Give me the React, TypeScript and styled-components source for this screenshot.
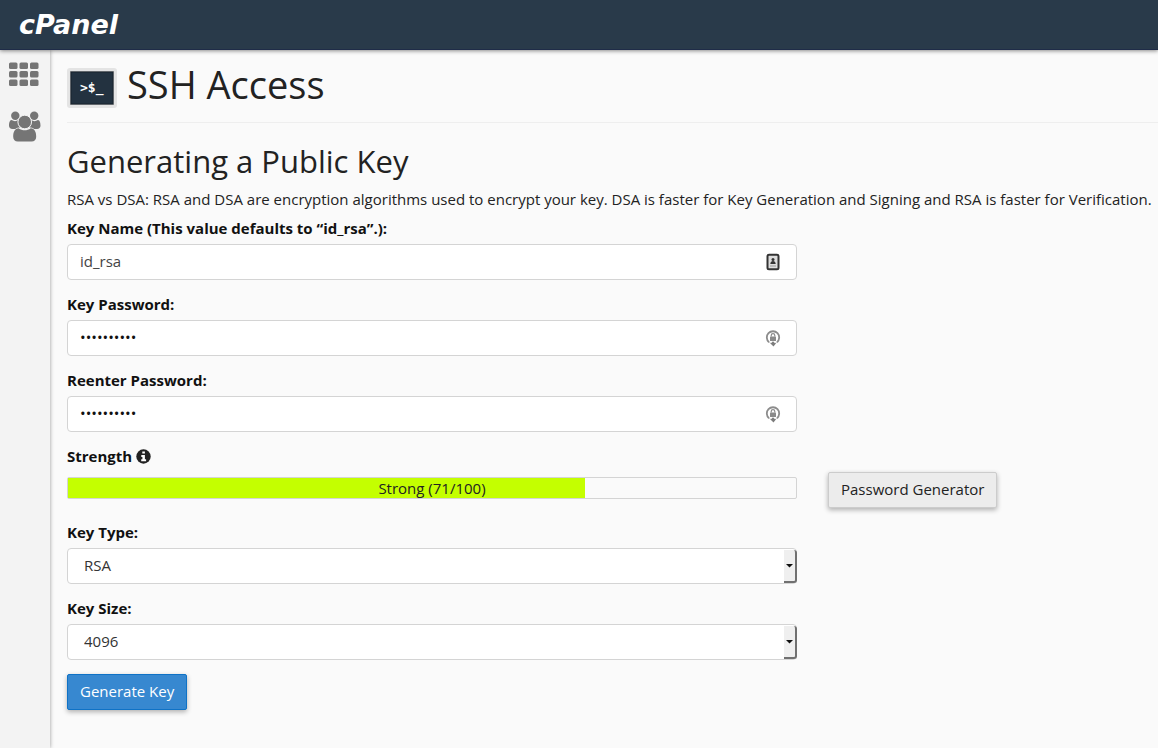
import React, { useState } from 'react';
import styled, { createGlobalStyle } from 'styled-components';

const GlobalStyle = createGlobalStyle`
  *, *::before, *::after { box-sizing: border-box; }
  body {
    margin: 0;
    background: #fafafa;
    color: #222;
    font: 15px/20px "Open Sans", sans-serif;
  }
  button, input, select { font: inherit; color: inherit; }
`;

const Page = styled.div`
  display: flex;
  flex-direction: column;
  min-height: 100vh;
`;

const TopBar = styled.header`
  position: relative;
  z-index: 1;
  display: flex;
  align-items: center;
  height: 50px;
  padding: 0 19px;
  background: #293a4a;
  border-bottom: 1px solid #1f2c48;
  box-shadow: 0 1px 4px rgba(0, 0, 0, 0.45);
`;

const Logo = styled.a`
  color: #fff;
  font: italic bold 27px/46px "DejaVu Sans", sans-serif;
  text-decoration: none;
`;

const Body = styled.div`
  display: flex;
  flex: 1;
`;

const SideBar = styled.nav`
  display: flex;
  flex-direction: column;
  align-items: flex-start;
  gap: 23px;
  flex: none;
  width: 50px;
  padding: 12px 0 0 9px;
  background: #f3f3f3;
  box-shadow: 0 0 4px rgba(0, 0, 0, 0.4);
`;

const SideLink = styled.a`
  display: block;
  color: #757575;
  svg { display: block; }
`;

const Main = styled.main`
  flex: 1;
  min-width: 0;
  padding: 10px 0 36px 17px;
`;

const TitleBar = styled.div`
  display: flex;
  gap: 10px;
  padding-bottom: 14px;
  border-bottom: 1px solid #eee;
`;

const TitleIcon = styled.svg`
  display: block;
  flex: none;
  margin-top: 8px;
`;

const Title = styled.h1`
  margin: 0;
  font-size: 38px;
  line-height: 48px;
  font-weight: 400;
`;

const SubTitle = styled.h2`
  margin: 19px 0 9px;
  font-size: 31px;
  line-height: 38px;
  font-weight: 400;
`;

const Intro = styled.p`
  margin: 0 0 9px;
`;

const Form = styled.form`
  display: grid;
  grid-template-columns: minmax(0, 730px) auto;
  justify-content: start;
  column-gap: 31px;
`;

const Field = styled.div`
  grid-column: 1;
  margin-bottom: 14px;
`;

const Label = styled.label`
  display: flex;
  align-items: center;
  gap: 4px;
  margin-bottom: 6px;
  color: #111;
  font-weight: 700;
`;

const StrengthLabel = styled(Label)`
  grid-column: 1;
`;

const Control = styled.div`
  position: relative;
`;

const TextInput = styled.input`
  display: block;
  width: 100%;
  height: 36px;
  padding: 0 40px 2px 12px;
  color: #444;
  background: #fff;
  border: 1px solid #d4d4d4;
  border-radius: 4px;

  &[type='password'] { color: #111; }
`;

const InputIcon = styled.svg`
  position: absolute;
  top: 9px;
  right: 15px;
`;

const SelectBox = styled.select`
  display: block;
  width: 100%;
  height: 36px;
  padding: 0 16px 2px;
  color: #333;
  background: #fff;
  border: 1px solid #d4d4d4;
  border-radius: 4px;
  appearance: none;
`;

const Arrow = styled.span`
  position: absolute;
  top: 2px;
  right: 0;
  bottom: 1px;
  display: flex;
  align-items: center;
  justify-content: center;
  width: 13px;
  background: #efefef;
  border: solid #707070;
  border-width: 0 2px 2px 0;
  border-radius: 0 3px 3px 0;
  pointer-events: none;
`;

const Meter = styled.div`
  position: relative;
  grid-column: 1;
  height: 22px;
  margin: 5px 0 23px;
  background: #fafafa;
  border: 1px solid #d4d4d4;
  border-radius: 2px;
`;

const MeterFill = styled.div`
  height: 100%;
  background: #c4ff00;
`;

const MeterText = styled.span`
  position: absolute;
  inset: 0;
  color: #222;
  text-align: center;
`;

const Button = styled.button<{ $primary?: boolean }>`
  grid-column: ${(p) => (p.$primary ? 1 : 2)};
  justify-self: start;
  height: 36px;
  padding: 0 12px 2px;
  color: ${(p) => (p.$primary ? '#fff' : '#222')};
  background: ${(p) => (p.$primary ? '#3788d0' : '#ececec')};
  border: 1px solid ${(p) => (p.$primary ? '#0f72c6' : '#ccc')};
  border-radius: 2px;
  box-shadow: 0 2px 5px rgba(0, 0, 0, 0.3);
  white-space: nowrap;
`;

const AppsIcon = () => (
  <svg width="30" height="26" viewBox="0 0 30 26" fill="currentColor" aria-hidden="true">
    {[0.5, 9, 17.5].map((y) =>
      [0, 10.5, 21].map((x) => <rect key={`${x}-${y}`} x={x} y={y} width="8.5" height="6.5" rx="1.5" />),
    )}
  </svg>
);

const UsersIcon = () => (
  <svg width="32" height="31" viewBox="0 0 32 31" fill="currentColor" aria-hidden="true">
    <circle cx="6.3" cy="4.7" r="4.2" />
    <circle cx="25.2" cy="4.7" r="4.2" />
    <path d="M2.6 9c2.2 1.5 4.7 1.5 6.7 0-.7 3 .1 5.5 1.7 7.6-1.8 0-3.4.5-4.7 1.4H3.5C1.3 18 0 16.8 0 14.8 0 12.3.5 9 2.6 9Z" />
    <path d="M28.9 9c-2.2 1.5-4.7 1.5-6.7 0 .7 3-.1 5.5-1.7 7.6 1.8 0 3.4.5 4.7 1.4H28c2.2 0 3.5-1.2 3.5-3.2 0-2.5-.5-5.8-2.6-5.8Z" />
    <circle cx="15.7" cy="11" r="6.8" stroke="#f3f3f3" strokeWidth="1" />
    <path d="M9.6 17.2c3.8 2.8 8.4 2.8 12.2 0 3.7 0 5.4 3.5 5.4 8.6 0 3-1.8 4.7-4.6 4.7H8.8c-2.8 0-4.6-1.7-4.6-4.7 0-5.1 1.7-8.6 5.4-8.6Z" />
  </svg>
);

const TerminalIcon = () => (
  <TitleIcon width="50" height="40" viewBox="0 0 50 40" aria-hidden="true">
    <rect width="50" height="40" rx="3" fill="#e4e4e4" />
    <rect x="3" y="3" width="44" height="34" fill="#aaa" />
    <rect x="4" y="4" width="42" height="32" fill="#233240" stroke="#18232d" />
    <text x="13" y="24" fill="#fff" fontFamily="DejaVu Sans Mono, monospace" fontWeight="700" fontSize="13">
      &gt;$_
    </text>
  </TitleIcon>
);

const ContactIcon = () => (
  <InputIcon width="18" height="18" viewBox="0 0 18 18" aria-hidden="true">
    <rect x="3.5" y="1.8" width="11" height="14.5" rx="1.5" fill="#ddd" stroke="#333" strokeWidth="2" />
    <circle cx="9" cy="6.5" r="1.5" fill="#333" />
    <path d="M6.3 11c0-4 5.4-4 5.4 0Z" fill="#333" />
    <path d="M6 13h6" stroke="#999" />
  </InputIcon>
);

const LockIcon = () => (
  <InputIcon width="18" height="18" viewBox="0 0 18 18" aria-hidden="true">
    <path d="M5 13.2A6.2 6.2 0 1 1 13 13.2" fill="none" stroke="#8c8c8c" strokeWidth="1.8" />
    <path d="M4.500 12.500 7 14.200 9 12.200 11 14.200 13 13 9.500 17.500 7.500 15.500Z" fill="#7c7c7c" />
    <rect x="6" y="7.6" width="6" height="4.4" rx=".6" fill="#8a8a8a" />
    <path d="M7.2 7.6V6.4a1.8 1.8 0 0 1 3.6 0v1.2" fill="none" stroke="#8a8a8a" strokeWidth="1.2" />
  </InputIcon>
);

const InfoIcon = () => (
  <svg width="15" height="15" viewBox="0 0 15 15" aria-hidden="true">
    <circle cx="7.5" cy="7.5" r="7.2" fill="#222" />
    <path d="M6.3 2.5h2.6v2H6.3ZM5.3 6h3.6v4.3h1.2v1.9H5.2v-1.9h1.2V7.9H5.3Z" fill="#fff" />
  </svg>
);

const ArrowIcon = () => (
  <svg width="7" height="4" viewBox="0 0 7 4" aria-hidden="true">
    <path d="M0 0h7L3.5 3.5Z" fill="#111" />
  </svg>
);

function PasswordField({ id, label }: { id: string; label: string }) {
  const [value, setValue] = useState('abcdefghij');
  return (
    <Field>
      <Label htmlFor={id}>{label}</Label>
      <Control>
        <TextInput id={id} type="password" value={value} onChange={(e) => setValue(e.target.value)} />
        <LockIcon />
      </Control>
    </Field>
  );
}

function SelectField({ id, label, options }: { id: string; label: string; options: string[] }) {
  return (
    <Field>
      <Label htmlFor={id}>{label}</Label>
      <Control>
        <SelectBox id={id} defaultValue={options[0]}>
          {options.map((o) => (
            <option key={o}>{o}</option>
          ))}
        </SelectBox>
        <Arrow>
          <ArrowIcon />
        </Arrow>
      </Control>
    </Field>
  );
}

export default function App() {
  const strength = 71;
  return (
    <Page>
      <GlobalStyle />
      <TopBar>
        <Logo href="#home">cPanel</Logo>
      </TopBar>
      <Body>
        <SideBar>
          <SideLink href="#apps" aria-label="Home">
            <AppsIcon />
          </SideLink>
          <SideLink href="#users" aria-label="User Manager">
            <UsersIcon />
          </SideLink>
        </SideBar>
        <Main>
          <TitleBar>
            <TerminalIcon />
            <Title>SSH Access</Title>
          </TitleBar>
          <SubTitle>Generating a Public Key</SubTitle>
          <Intro>
            RSA vs DSA: RSA and DSA are encryption algorithms used to encrypt your key. DSA is faster for Key
            Generation and Signing and RSA is faster for Verification.
          </Intro>
          <Form onSubmit={(e) => e.preventDefault()}>
            <Field>
              <Label htmlFor="key-name">Key Name (This value defaults to “id_rsa”.):</Label>
              <Control>
                <TextInput id="key-name" type="text" defaultValue="id_rsa" />
                <ContactIcon />
              </Control>
            </Field>
            <PasswordField id="password" label="Key Password:" />
            <PasswordField id="password-again" label="Reenter Password:" />
            <StrengthLabel as="div">
              Strength <InfoIcon />
            </StrengthLabel>
            <Meter
              role="meter"
              aria-label="Strength"
              aria-valuemin={0}
              aria-valuemax={100}
              aria-valuenow={strength}
            >
              <MeterFill style={{ width: `${strength}%` }} />
              <MeterText>Strong ({strength}/100)</MeterText>
            </Meter>
            <Button type="button">Password Generator</Button>
            <SelectField id="key-type" label="Key Type:" options={['RSA', 'DSA']} />
            <SelectField id="key-size" label="Key Size:" options={['4096', '2048', '1024']} />
            <Button type="submit" $primary>
              Generate Key
            </Button>
          </Form>
        </Main>
      </Body>
    </Page>
  );
}
